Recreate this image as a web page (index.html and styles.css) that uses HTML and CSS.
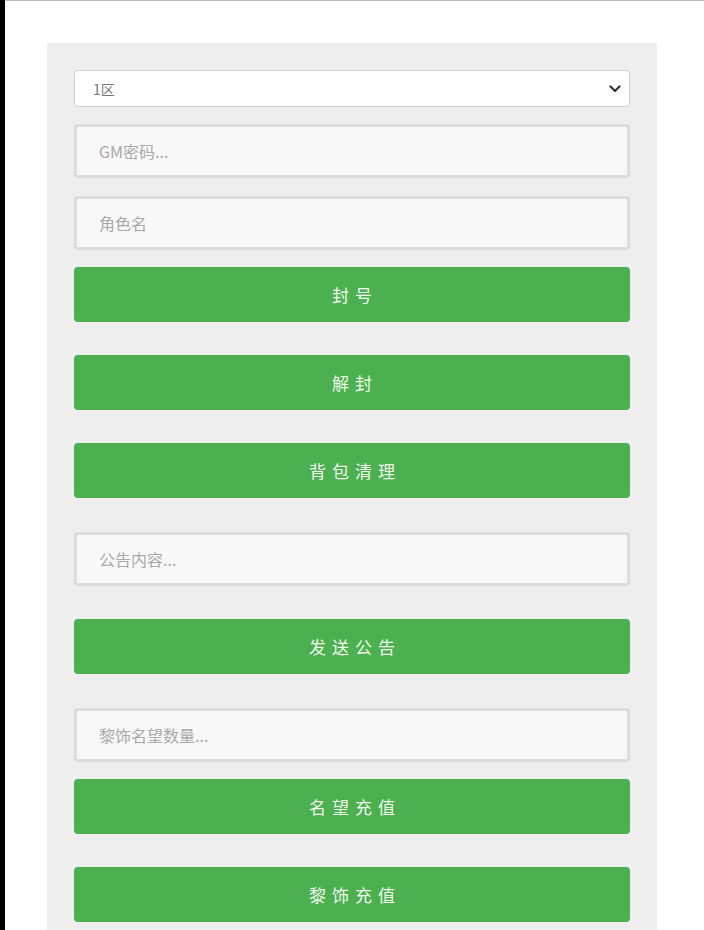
FILE: index.html
```html
<!DOCTYPE html>
<html lang="zh">
<head>
<meta charset="utf-8">
<title>GM</title>
<link rel="stylesheet" href="styles.css">
</head>
<body>
<div class="frame">
  <div class="panel">
    <div class="zone-wrap">
      <select class="zone">
        <option>1区</option>
      </select>
      <svg class="chev" width="12" height="8" viewBox="0 0 12 8"><path d="M1.5 1.5 L6 6 L10.5 1.5" fill="none" stroke="#333" stroke-width="2.2" stroke-linecap="round" stroke-linejoin="round"/></svg>
    </div>
    <input class="field m17" type="text" placeholder="GM密码...">
    <input class="field m18" type="text" placeholder="角色名">
    <button class="btn m17">封号</button>
    <button class="btn m33">解封</button>
    <button class="btn m33">背包清理</button>
    <input class="field m34" type="text" placeholder="公告内容...">
    <button class="btn m33">发送公告</button>
    <input class="field m34" type="text" placeholder="黎饰名望数量...">
    <button class="btn m17">名望充值</button>
    <button class="btn m33">黎饰充值</button>
  </div>
</div>
</body>
</html>
```

FILE: styles.css
```css
html, body {
  margin: 0;
  padding: 0;
  background: #000;
  height: 100%;
  overflow: hidden;
}
body {
  padding-left: 5px;
  font-family: "Noto Sans CJK SC", "Noto Sans", sans-serif;
}
.frame {
  background: #fff;
  border-top: 1px solid #bdbdbd;
  height: 100%;
  padding: 42px 0 0 42px;
  box-sizing: border-box;
}
.panel {
  width: 610px;
  background: #eeeeee;
  padding: 27px 27px 40px;
  box-sizing: border-box;
  display: flex;
  flex-direction: column;
}
.zone-wrap {
  position: relative;
  height: 37px;
}
.zone {
  height: 37px;
  width: 100%;
  border: 1px solid #cfcfcf;
  border-radius: 4px;
  background: #fff;
  color: #777;
  font-family: "Noto Sans CJK SC", sans-serif;
  font-size: 14px;
  padding: 0 18px;
  margin: 0;
  appearance: none;
  -webkit-appearance: none;
  outline: none;
}
.chev {
  position: absolute;
  right: 9px;
  top: 15px;
  pointer-events: none;
}
.field {
  height: 54px;
  width: 100%;
  box-sizing: border-box;
  border: 3px solid #dcdcdc;
  border-radius: 4px;
  background: #f8f8f8;
  padding: 0 22px;
  font-family: "Noto Sans CJK SC", sans-serif;
  font-size: 16px;
  color: #555;
  outline: none;
}
.field::placeholder {
  color: #a9a9a9;
}
.btn {
  height: 55px;
  width: 100%;
  border: none;
  border-radius: 4px;
  background: #4caf50;
  color: #eefaea;
  font-family: "Noto Sans CJK SC", sans-serif;
  font-size: 17px;
  letter-spacing: 6px;
  padding: 0 0 0 6px;
  cursor: pointer;
}
.m17 { margin-top: 17px; }
.m18 { margin-top: 18px; }
.m33 { margin-top: 33px; }
.m34 { margin-top: 34px; }
```
